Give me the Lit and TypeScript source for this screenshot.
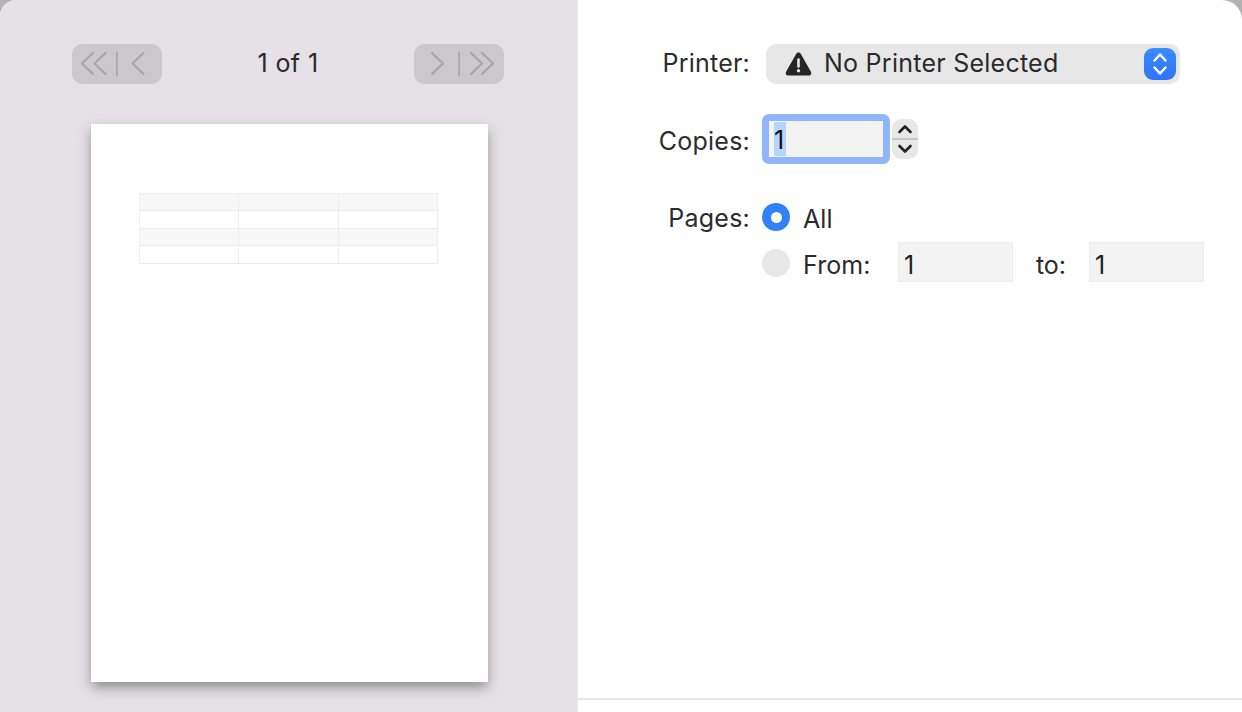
import { LitElement, html, svg, css } from "lit";
import { customElement } from "lit/decorators.js";

const chev = (d: string, w = 3) => svg`<path d=${d} fill="none" stroke="currentColor" stroke-width=${w} stroke-linecap="round" stroke-linejoin="round"/>`;

@customElement("app-root")
export class AppRoot extends LitElement {
  static styles = css`
    :host { display: block; width: 1242px; height: 712px; overflow: hidden; background: #b4b2b2; font-family: Inter, "Noto Sans", sans-serif; color: #2b2b2b; font-size: 25px; }
    .window { display: flex; height: 712px; background: #fff; border-radius: 16px 20px 0 0; overflow: hidden; }
    .left { box-sizing: border-box; width: 578px; flex: none; background: #e6e1e6; border-right: 1px solid #ebe9eb; padding: 44px 73px 0 72px; display: flex; flex-direction: column; align-items: center; }
    .nav { align-self: stretch; display: flex; justify-content: space-between; align-items: center; height: 40px; }
    .pager { width: 90px; height: 40px; border-radius: 10px; background: #cbc7cb; color: #a8a5a9; display: block; }
    .count { font-size: 25px; line-height: 38px; height: 40px; color: #2a2a2c; letter-spacing: 0.4px; }
    .sheet { box-sizing: border-box; width: 397px; height: 558px; margin-top: 40px; margin-left: 3px; background: #fff; box-shadow: 0 6px 12px -1px rgba(50,45,50,.5); padding: 69px 50px 0 48px; }
    .table { width: 299px; display: grid; grid-template-columns: 99px 100px 99px; border-top: 1px solid #eeeeef; border-left: 1px solid #f1f1f2; }
    .cell { box-sizing: border-box; height: 18px; border-right: 1px solid #ecedef; border-bottom: 1px solid #ebebed; }
    .cell.shade { background: #f7f7f7; height: 17px; }
    .right { flex: 1; min-width: 0; display: flex; flex-direction: column; }
    .form { flex: 1; padding: 44px 0 0 0; display: grid; grid-template-columns: 172px auto; grid-auto-rows: min-content; }
    .label { text-align: right; color: #2c2c2c; line-height: 38px; height: 40px; letter-spacing: 0.22px; }
    .select { margin-left: 16px; width: 414px; height: 40px; border-radius: 10px; background: #e7e7e7; display: flex; align-items: center; box-sizing: border-box; padding: 0 4px 0 19px; }
    .warn { width: 27px; height: 24px; flex: none; color: #262626; }
    .select .text { margin-left: 12px; margin-bottom: 2px; flex: 1; color: #2b2b2b; letter-spacing: 0.25px; }
    .blue { width: 32px; height: 32px; border-radius: 9px; background: linear-gradient(#3a8dfd, #2f73fa); color: #fff; display: block; flex: none; }
    .copies-label { margin-top: 38px; }
    .copies { margin-top: 30px; margin-left: 12px; display: flex; align-items: center; gap: 2px; }
    .focus { box-sizing: border-box; width: 128px; height: 50px; border-radius: 7px; background: #f3f3f3; border: 7px solid #8fb6fb; display: flex; align-items: center; padding-left: 5px; color: #111; }
    .sel { background: #b4d6fe; line-height: 37px; height: 34px; width: 12px; display: block; }
    .stepper { width: 26px; height: 40px; border-radius: 9px; background: #e8e8e8; color: #222; display: block; }
    .pages-label { margin-top: 35px; }
    .pages { margin-top: 33px; margin-left: 12px; display: flex; flex-direction: column; gap: 5px; }
    .row { display: flex; align-items: center; height: 40px; }
    .radio { box-sizing: border-box; width: 28px; height: 28px; border-radius: 50%; flex: none; display: flex; align-items: center; justify-content: center; }
    .radio.on { background: #3182f8; }
    .radio.on::after { content: ""; display: block; width: 11px; height: 11px; border-radius: 50%; background: #fff; }
    .radio.off { background: #e8e8e8; margin-top: 2px; }
    .opt { margin-left: 13px; color: #2b2b2b; margin-top: 4px; letter-spacing: 0.1px; }
    .from { width: 95px; flex: none; margin-top: 6px; }
    .field { box-sizing: border-box; width: 115px; height: 40px; background: #f3f3f3; border: 1px solid #ececec; padding-left: 5px; line-height: 45px; color: #222; }
    .to { width: 76px; text-align: center; margin-top: 6px; }
    .footer { height: 12px; flex: none; border-top: 2px solid #e8e8e8; }
  `;

  render() {
    const rows = [true, false, true, false];
    return html`<div class="window">
      <section class="left">
        <div class="nav">
          <svg class="pager" viewBox="0 0 90 40">
            ${chev("M21 9 L10 19.5 L21 30 M33.5 9 L22.5 19.5 L33.5 30", 2.2)}
            <rect x="44" y="8" width="1.6" height="24" fill="currentColor"/>
            ${chev("M71.5 9 L60.5 19.5 L71.5 30", 2.2)}
          </svg>
          <span class="count">1 of 1</span>
          <svg class="pager" viewBox="0 0 90 40">
            ${chev("M18 9 L29 19.5 L18 30", 2.2)}
            <rect x="44.4" y="8" width="1.6" height="24" fill="currentColor"/>
            ${chev("M57 9 L68 19.5 L57 30 M68 9 L79 19.5 L68 30", 2.2)}
          </svg>
        </div>
        <div class="sheet">
          <div class="table">
            ${rows.map((s) => [0, 1, 2].map(() => html`<div class="cell ${s ? "shade" : ""}"></div>`))}
          </div>
        </div>
      </section>
      <section class="right">
        <div class="form">
          <div class="label">Printer:</div>
          <div class="select">
            <svg class="warn" viewBox="0 0 27 24">
              <path d="M13.5 .5 C12.3 .5 11.6 1.2 11 2.2 L1.2 19.6 C.1 21.5 1 23.6 3.3 23.6 H23.7 C26 23.6 26.9 21.5 25.8 19.6 L16 2.2 C15.4 1.2 14.7 .5 13.5 .5 Z" fill="currentColor"/>
              <path d="M13.5 7.5 V14.5" stroke="#e7e7e7" stroke-width="2.6" stroke-linecap="round"/>
              <circle cx="13.5" cy="18.8" r="1.7" fill="#e7e7e7"/>
            </svg>
            <span class="text">No Printer Selected</span>
            <svg class="blue" viewBox="0 0 32 32">
              ${chev("M10.5 12.5 L16 6.5 L21.5 12.5 M10.5 19.5 L16 25.5 L21.5 19.5", 2.4)}
            </svg>
          </div>
          <div class="label copies-label">Copies:</div>
          <div class="copies">
            <div class="focus"><span class="sel">1</span></div>
            <svg class="stepper" viewBox="0 0 26 40">
              <rect x="0" y="19" width="26" height="2" fill="#c9c9c9"/>
              ${chev("M7.5 13 L13 7.5 L18.5 13 M7.5 27 L13 32.5 L18.5 27", 2.6)}
            </svg>
          </div>
          <div class="label pages-label">Pages:</div>
          <div class="pages">
            <div class="row"><span class="radio on"></span><span class="opt">All</span></div>
            <div class="row">
              <span class="radio off"></span><span class="opt from">From:</span>
              <span class="field">1</span><span class="to">to:</span><span class="field">1</span>
            </div>
          </div>
        </div>
        <div class="footer"></div>
      </section>
    </div>`;
  }
}
